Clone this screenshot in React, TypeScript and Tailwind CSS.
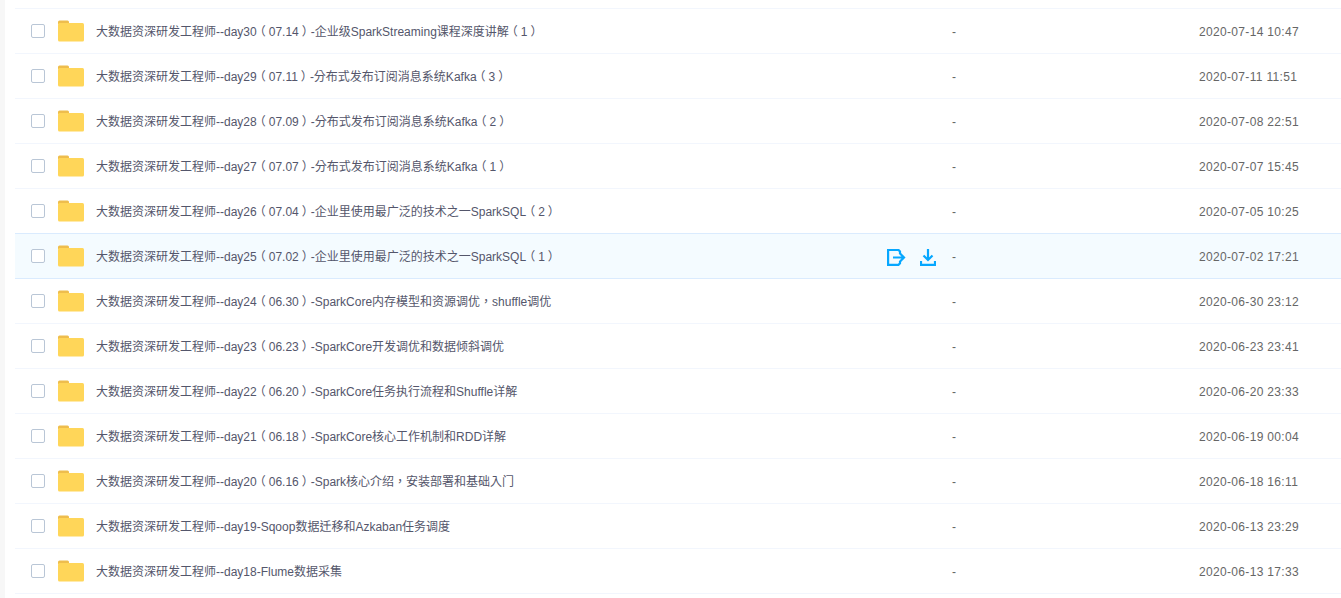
const rows = [
  ["大数据资深研发工程师--day30（07.14）-企业级SparkStreaming课程深度讲解（1）", "2020-07-14 10:47"],
  ["大数据资深研发工程师--day29（07.11）-分布式发布订阅消息系统Kafka（3）", "2020-07-11 11:51"],
  ["大数据资深研发工程师--day28（07.09）-分布式发布订阅消息系统Kafka（2）", "2020-07-08 22:51"],
  ["大数据资深研发工程师--day27（07.07）-分布式发布订阅消息系统Kafka（1）", "2020-07-07 15:45"],
  ["大数据资深研发工程师--day26（07.04）-企业里使用最广泛的技术之一SparkSQL（2）", "2020-07-05 10:25"],
  ["大数据资深研发工程师--day25（07.02）-企业里使用最广泛的技术之一SparkSQL（1）", "2020-07-02 17:21"],
  ["大数据资深研发工程师--day24（06.30）-SparkCore内存模型和资源调优，shuffle调优", "2020-06-30 23:12"],
  ["大数据资深研发工程师--day23（06.23）-SparkCore开发调优和数据倾斜调优", "2020-06-23 23:41"],
  ["大数据资深研发工程师--day22（06.20）-SparkCore任务执行流程和Shuffle详解", "2020-06-20 23:33"],
  ["大数据资深研发工程师--day21（06.18）-SparkCore核心工作机制和RDD详解", "2020-06-19 00:04"],
  ["大数据资深研发工程师--day20（06.16）-Spark核心介绍，安装部署和基础入门", "2020-06-18 16:11"],
  ["大数据资深研发工程师--day19-Sqoop数据迁移和Azkaban任务调度", "2020-06-13 23:29"],
  ["大数据资深研发工程师--day18-Flume数据采集", "2020-06-13 17:33"],
];

function Folder() {
  return (
    <svg width="26" height="22" viewBox="0 0 26 22" className="shrink-0">
      <path d="M0 2a1.500 1.500 0 0 1 1.500-1.500h8a1.500 1.500 0 0 1 1.500 1.500v2H0z" fill="#eebd4d" />
      <rect x="0" y="3" width="26" height="18.500" rx="1.500" fill="#ffd659" />
    </svg>
  );
}

function ShareIcon() {
  return (
    <svg width="19" height="17" viewBox="0 0 19 17" fill="none" stroke="#06a7ff" strokeWidth="2.2">
      <path d="M13 5V2.500L11.500 1H1.100v14.900h10.400l1.500-1.500V12" />
      <path d="M6 8.500h11M13 4.500l4 4-4 4" />
    </svg>
  );
}

function DownloadIcon() {
  return (
    <svg width="16" height="17" viewBox="0 0 16 17" fill="none" stroke="#06a7ff" strokeWidth="2.2">
      <path d="M8 0v11M3.500 6.500L8 11 12.500 6.500" />
      <path d="M1 12v3.900h14V12" />
    </svg>
  );
}

// 全角括号贴着数字，用 halt 收窄后两边补空，放到字宽中间
function Name({ text }: { text: string }) {
  return (
    <>
      {text.split(/([（）])/).map((part, i) =>
        part === "（" || part === "）" ? (
          <span key={i} className="mx-[3px] [font-feature-settings:'halt']">
            {part}
          </span>
        ) : (
          part
        )
      )}
    </>
  );
}

export default function App() {
  return (
    <div className="h-[598px] w-[1341px] overflow-hidden bg-white font-['Liberation_Sans','Noto_Sans_CJK_TC',sans-serif]">
      <div className="flex h-full">
        <div className="w-[5px] shrink-0 bg-[#f7f7f7]" />
        <div className="ml-[10px] flex-1 pt-2">
          {rows.map(([name, date], i) => {
            const active = i === 5;
            return (
              <div
                key={name}
                className={`flex items-center border-t ${
                  active
                    ? "relative -mb-px h-[46px] border-b border-[#daebfe] bg-[#f4fbff]"
                    : "h-[45px] border-[#f2f6fd]"
                }`}
              >
                <div className="ml-4 h-[14px] w-[14px] shrink-0 rounded-[2px] border border-[#b9c6d6] bg-white" />
                <div className="ml-[13px]">
                  <Folder />
                </div>
                <div className="ml-[12px] w-[791px] shrink-0 pt-px text-xs text-[#54566b]">
                  <Name text={name} />
                </div>
                <div className="mt-[2px] flex w-[65px] shrink-0 items-center gap-[14px]">
                  {active && (
                    <>
                      <ShareIcon />
                      <DownloadIcon />
                    </>
                  )}
                </div>
                <div className="w-[247px] shrink-0 pt-px text-xs text-[#666]">-</div>
                <div className="pt-px text-xs tracking-[0.33px] text-[#666]">{date}</div>
              </div>
            );
          })}
          <div className="border-t border-[#f2f6fd]" />
        </div>
      </div>
    </div>
  );
}
